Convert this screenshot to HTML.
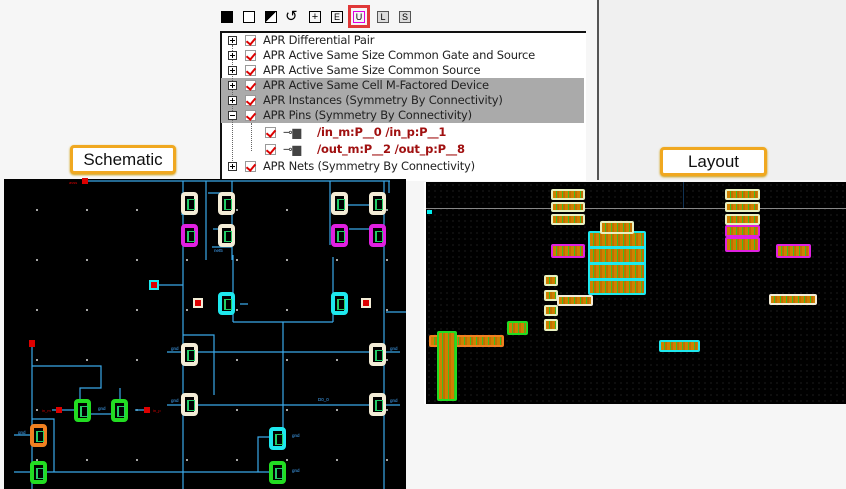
<!DOCTYPE html>
<html><head><meta charset="utf-8"><style>
*{margin:0;padding:0;box-sizing:border-box}
body{width:846px;height:489px;overflow:hidden;background:#f6f6f6;position:relative;font-family:"Liberation Sans","DejaVu Sans",sans-serif}
.a{position:absolute}
.tb{position:absolute;top:11px;width:12px;height:12px}
.row{position:absolute;left:221px;width:363px;height:15px;font-size:11.5px;color:#222;line-height:15px;font-family:"DejaVu Sans","Liberation Sans",sans-serif;letter-spacing:-0.2px}
.pl{position:absolute;left:7px;top:3px;width:9px;height:9px;border:1px solid #333;background:#fff}
.pl:before{content:"";position:absolute;left:1px;top:3px;width:5px;height:1px;background:#000}
.pl.p:after{content:"";position:absolute;left:3px;top:1px;width:1px;height:5px;background:#000}
.ck{position:absolute;left:24px;top:2px;width:11px;height:11px;border:1px solid #999;background:#fff}
.ck:after{content:"";position:absolute;left:2px;top:0px;width:4px;height:7px;border-right:2.5px solid #d00;border-bottom:2.5px solid #d00;transform:rotate(40deg)}
.lbl{position:absolute;background:#fff;border:3px solid #f0a820;border-radius:4px;font-size:17px;color:#111;text-align:center;box-shadow:0 1px 2px #c90}
.d{position:absolute;border:4px solid;border-radius:4px;background:#000}
.d:after{content:"";position:absolute;left:2px;top:3px;width:5px;height:9px;border:1px solid #2c6;border-left-width:2px}
.c{border-color:#f3ecd6}.m{border-color:#e020e0}.y{border-color:#1ee8ee}.g{border-color:#22dd22}.o{border-color:#f08020}
.L{position:absolute;border:2px solid;border-radius:2px;background:repeating-linear-gradient(90deg,#d08000 0 3px,#40c020 3px 4px,#c07000 4px 6px)}
</style></head><body>
<!-- toolbar -->
<div class="tb" style="left:221px;background:#000"></div>
<div class="tb" style="left:243px;border:1px solid #000;background:#fff"></div>
<div class="tb" style="left:265px;background:linear-gradient(135deg,#000 50%,#fff 50%);border:1px solid #000"></div>
<div class="a" style="left:285px;top:7px;font-size:15px">↺</div>
<div class="tb" style="left:309px;border:1px solid #000;font-size:11px;line-height:10px;text-align:center">+</div>
<div class="tb" style="left:331px;border:1px solid #000;font-size:9px;line-height:10px;text-align:center">E</div>
<div class="a" style="left:348px;top:5px;width:22px;height:23px;border:3px solid #e03838"></div>
<div class="tb" style="left:353px;border:1px solid #e000e0;font-size:9px;line-height:10px;text-align:center">U</div>
<div class="tb" style="left:377px;border:1px solid #555;font-size:9px;line-height:10px;text-align:center;background:#ddd">L</div>
<div class="tb" style="left:399px;border:1px solid #555;font-size:9px;line-height:10px;text-align:center;background:#ddd">S</div>
<div class="a" style="left:597px;top:0;width:2px;height:180px;background:#555"></div>
<div class="a" style="left:599px;top:0;width:247px;height:180px;background:#f0f0f0"></div>
<!-- tree -->
<div class="a" style="left:220px;top:31px;width:366px;height:150px;background:#fff;border-top:2px solid #111;border-left:2px solid #111"></div>
<div class="a" style="left:221px;top:78px;width:363px;height:45px;background:#aaa"></div>
<div class="a" style="left:232px;top:45px;height:124px;border-left:1px dotted #666"></div>
<div class="a" style="left:251px;top:123px;height:28px;border-left:1px dotted #666"></div>
<div class="row" style="top:33px"><span class="pl p"></span><span class="ck"></span><span style="position:absolute;left:42px">APR Differential Pair</span></div>
<div class="row" style="top:48px"><span class="pl p"></span><span class="ck"></span><span style="position:absolute;left:42px">APR Active Same Size Common Gate and Source</span></div>
<div class="row" style="top:63px"><span class="pl p"></span><span class="ck"></span><span style="position:absolute;left:42px">APR Active Same Size Common Source</span></div>
<div class="row" style="top:78px"><span class="pl p"></span><span class="ck"></span><span style="position:absolute;left:42px">APR Active Same Cell M-Factored Device</span></div>
<div class="row" style="top:93px"><span class="pl p"></span><span class="ck"></span><span style="position:absolute;left:42px">APR Instances (Symmetry By Connectivity)</span></div>
<div class="row" style="top:108px"><span class="pl"></span><span class="ck"></span><span style="position:absolute;left:42px">APR Pins (Symmetry By Connectivity)</span></div>
<div class="row" style="top:125px;color:#a01010;font-weight:bold"><span class="ck" style="left:44px"></span><span style="position:absolute;left:62px;top:0;color:#444;font-weight:normal">⊸▆</span><span style="position:absolute;left:96px">/in_m:P__0 /in_p:P__1</span></div>
<div class="row" style="top:142px;color:#a01010;font-weight:bold"><span class="ck" style="left:44px"></span><span style="position:absolute;left:62px;top:0;color:#444;font-weight:normal">⊸▆</span><span style="position:absolute;left:96px">/out_m:P__2 /out_p:P__8</span></div>
<div class="row" style="top:159px"><span class="pl p"></span><span class="ck"></span><span style="position:absolute;left:42px">APR Nets (Symmetry By Connectivity)</span></div>
<!-- labels -->
<div class="lbl" style="left:70px;top:145px;width:106px;height:29px;line-height:23px">Schematic</div>
<div class="lbl" style="left:660px;top:147px;width:107px;height:29px;line-height:23px">Layout</div>
<!-- schematic -->
<div class="a" style="left:4px;top:179px;width:402px;height:310px;background:#000;background-image:radial-gradient(#ddd 0.8px,transparent 1px);background-size:50px 50px;background-position:8px 6px"></div>
<svg class="a" style="left:0;top:0" width="846" height="489">
<g stroke="#3aa8e8" stroke-width="1.2" fill="none">
<path d="M86 181H390M183 181V489M384 181V489M182 193V215M206 181V260M232 181V255M330 181V245M212 247H232V260M389 181V193M150 285H183M240 304H248M233 255V304M333 257V304M233 304V322M333 304V322M233 322H333M283 322V430M183 335H214V395M167 352H400M167 405H400M32 340V489M32 366H101V388H80V400M80 414H128M32 419H54V472M32 472H285M258 472V437H270M120 399V388M135 410H145M52 410H75M14 435H31M14 472H31M386 312H406M208 193H232M213 229H232M347 205H370M349 229H370M195 304H200"/>
</g>
<g fill="#d00"><rect x="82" y="178" width="6" height="6"/><rect x="29" y="340" width="6" height="7"/><rect x="56" y="407" width="6" height="6"/><rect x="144" y="407" width="6" height="6"/></g>
<g fill="#d00" font-size="4" font-family="Liberation Sans"><text x="69" y="184">avss</text><text x="42" y="412">in_m</text><text x="153" y="412">in_p</text></g>
<g fill="#4af" font-size="4.5" font-family="Liberation Sans"><text x="214" y="252">net5</text><text x="318" y="401">D0_0</text><text x="171" y="350">gnd</text><text x="390" y="350">gnd</text><text x="171" y="402">gnd</text><text x="390" y="402">gnd</text><text x="98" y="410">gnd</text><text x="18" y="434">gnd</text><text x="292" y="437">gnd</text><text x="292" y="472">gnd</text></g>
</svg>
<div class="d c" style="left:181px;top:192px;width:17px;height:23px"></div>
<div class="d c" style="left:218px;top:192px;width:17px;height:23px"></div>
<div class="d m" style="left:181px;top:224px;width:17px;height:23px"></div>
<div class="d c" style="left:218px;top:224px;width:17px;height:23px"></div>
<div class="d c" style="left:331px;top:192px;width:17px;height:23px"></div>
<div class="d c" style="left:369px;top:192px;width:17px;height:23px"></div>
<div class="d m" style="left:331px;top:224px;width:17px;height:23px"></div>
<div class="d m" style="left:369px;top:224px;width:17px;height:23px"></div>
<div class="d y" style="left:218px;top:292px;width:17px;height:23px"></div>
<div class="d y" style="left:331px;top:292px;width:17px;height:23px"></div>
<div class="d c" style="left:181px;top:343px;width:17px;height:23px"></div>
<div class="d c" style="left:369px;top:343px;width:17px;height:23px"></div>
<div class="d c" style="left:181px;top:393px;width:17px;height:23px"></div>
<div class="d c" style="left:369px;top:393px;width:17px;height:23px"></div>
<div class="d g" style="left:74px;top:399px;width:17px;height:23px"></div>
<div class="d g" style="left:111px;top:399px;width:17px;height:23px"></div>
<div class="d o" style="left:30px;top:424px;width:17px;height:23px"></div>
<div class="d g" style="left:30px;top:461px;width:17px;height:23px"></div>
<div class="d y" style="left:269px;top:427px;width:17px;height:23px"></div>
<div class="d g" style="left:269px;top:461px;width:17px;height:23px"></div>
<div class="a" style="left:149px;top:280px;width:10px;height:10px;border:2px solid #1ee8ee;background:#d00"></div>
<div class="a" style="left:193px;top:298px;width:10px;height:10px;border:2px solid #f3ecd6;background:#d00"></div>
<div class="a" style="left:361px;top:298px;width:10px;height:10px;border:2px solid #f3ecd6;background:#d00"></div>
<!-- layout -->
<div class="a" style="left:424px;top:182px;width:422px;height:222px;background:#000;background-image:radial-gradient(#333 0.6px,transparent 0.8px);background-size:6px 6px;border-left:2px solid #fff"></div>
<div class="a" style="left:426px;top:208px;width:420px;height:1px;background:#888"></div>
<div class="a" style="left:683px;top:182px;width:1px;height:26px;background:#135"></div>
<div class="a" style="left:427px;top:210px;width:5px;height:4px;background:#0ee"></div>
<div class="L" style="left:551px;top:189px;width:34px;height:11px;border-color:#e8f0c0"></div>
<div class="L" style="left:551px;top:202px;width:34px;height:10px;border-color:#e8f0c0"></div>
<div class="L" style="left:551px;top:214px;width:34px;height:11px;border-color:#e8f0c0"></div>
<div class="L" style="left:588px;top:231px;width:58px;height:64px;border-color:#1ee8ee;background:linear-gradient(#000 0,transparent 0),repeating-linear-gradient(180deg,transparent 0 13px,#1ee8ee 13px 16px),repeating-linear-gradient(90deg,#d08000 0 3px,#40c020 3px 4px,#c07000 4px 6px)"></div>
<div class="L" style="left:600px;top:221px;width:34px;height:13px;border-color:#e8f0c0"></div>
<div class="L" style="left:551px;top:244px;width:34px;height:14px;border-color:#e020e0"></div>
<div class="L" style="left:725px;top:189px;width:35px;height:11px;border-color:#e8f0c0"></div>
<div class="L" style="left:725px;top:202px;width:35px;height:10px;border-color:#e8f0c0"></div>
<div class="L" style="left:725px;top:214px;width:35px;height:11px;border-color:#e8f0c0"></div>
<div class="L" style="left:725px;top:225px;width:35px;height:12px;border-color:#e020e0"></div>
<div class="L" style="left:725px;top:237px;width:35px;height:15px;border-color:#e020e0"></div>
<div class="L" style="left:776px;top:244px;width:35px;height:14px;border-color:#e020e0"></div>
<div class="L" style="left:544px;top:275px;width:14px;height:11px;border-color:#e8f0c0"></div>
<div class="L" style="left:544px;top:290px;width:14px;height:11px;border-color:#e8f0c0"></div>
<div class="L" style="left:544px;top:305px;width:14px;height:11px;border-color:#e8f0c0"></div>
<div class="L" style="left:544px;top:319px;width:14px;height:12px;border-color:#e8f0c0"></div>
<div class="L" style="left:557px;top:295px;width:36px;height:11px;border-color:#f3ecd6"></div>
<div class="L" style="left:507px;top:321px;width:21px;height:14px;border-color:#22dd22"></div>
<div class="L" style="left:429px;top:335px;width:75px;height:12px;border-color:#f08020"></div>
<div class="L" style="left:437px;top:331px;width:20px;height:70px;border-color:#22dd22"></div>
<div class="L" style="left:659px;top:340px;width:41px;height:12px;border-color:#1ee8ee"></div>
<div class="L" style="left:769px;top:294px;width:48px;height:11px;border-color:#f3ecd6"></div>
</body></html>
